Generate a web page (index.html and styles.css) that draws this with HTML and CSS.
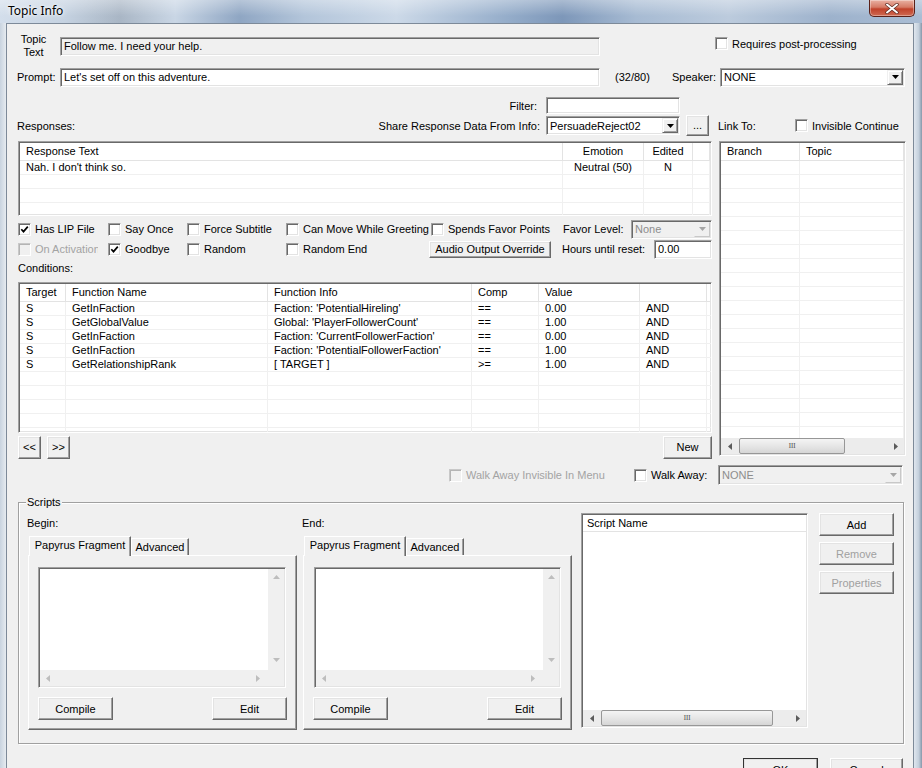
FILE: index.html
```html
<!DOCTYPE html>
<html lang="en">
<head>
  <meta charset="UTF-8">
  <meta name="viewport" content="width=device-width, initial-scale=1.0">
  <title>Topic Info</title>
  <link rel="stylesheet" href="styles.css">
</head>
<body>
<div class="window">

  <!-- title bar -->
  <div class="titlebar">
    <span class="title">Topic Info</span>
    <div class="close">
      <svg width="14" height="11" viewBox="0 0 14 11"><path d="M2 1.5l10 8M12 1.5l-10 8" stroke="#5b2a22" stroke-width="3.4" stroke-linecap="round"/><path d="M2 1.5l10 8M12 1.5l-10 8" stroke="#fff" stroke-width="2" stroke-linecap="round"/></svg>
    </div>
  </div>

  <div class="frame">
    <div class="frame-left"></div>
    <div class="client">

      <div class="row r-topic">
        <div class="lbl-topic">Topic<br>Text</div>
        <div class="field ro topic-field">Follow me. I need your help.</div>
        <label class="chk post-chk"><span class="box"></span>Requires post-processing</label>
      </div>

      <div class="row r-prompt">
        <div class="prompt-lbl">Prompt:</div>
        <div class="field prompt-field">Let's set off on this adventure.</div>
        <div class="count">(32/80)</div>
        <div class="speaker-lbl">Speaker:</div>
        <div class="combo speaker-combo">
          <span class="val">NONE</span>
          <span class="drop"><svg width="7" height="4" viewBox="0 0 7 4"><path d="M0 0h7L3.5 4z"/></svg></span>
        </div>
      </div>

      <div class="row r-filter">
        <div class="filter-lbl">Filter:</div>
        <div class="field filter-field"></div>
      </div>

      <div class="row r-resp">
        <div class="resp-lbls"><span>Responses:</span><span>Share Response Data From Info:</span></div>
        <div class="combo share-combo">
          <span class="val">PersuadeReject02</span>
          <span class="drop"><svg width="7" height="4" viewBox="0 0 7 4"><path d="M0 0h7L3.5 4z"/></svg></span>
        </div>
        <button class="btn dots-btn">...</button>
        <div class="link-lbl">Link To:</div>
        <label class="chk"><span class="box"></span>Invisible Continue</label>
      </div>

      <div class="mid">
        <div class="mid-left">

          <div class="list resp-list">
            <table class="grid">
              <thead>
                <tr><th class="rc1">Response Text</th><th class="rc2 mid-a">Emotion</th><th class="rc3 mid-a">Edited</th><th class="rc4"></th></tr>
              </thead>
              <tbody>
                <tr><td>Nah. I don't think so.</td><td class="mid-a">Neutral (50)</td><td class="mid-a">N</td><td></td></tr>
                <tr><td></td><td></td><td></td><td></td></tr>
                <tr><td></td><td></td><td></td><td></td></tr>
                <tr><td></td><td></td><td></td><td></td></tr>
              </tbody>
            </table>
          </div>

          <div class="row cb-row first">
            <label class="chk cw90"><span class="box"><svg width="9" height="9" viewBox="0 0 9 9"><path d="M1.3 4.2l2.2 2.4L7.8 1.6" fill="none" stroke="#000" stroke-width="1.7"/></svg></span>Has LIP File</label>
            <label class="chk cw79"><span class="box"></span>Say Once</label>
            <label class="chk cw99"><span class="box"></span>Force Subtitle</label>
            <label class="chk cw145"><span class="box"></span>Can Move While Greeting</label>
            <label class="chk cw132"><span class="box"></span>Spends Favor Points</label>
            <div class="favor-lbl">Favor Level:</div>
            <div class="combo dis favor-combo">
              <span class="val">None</span>
              <span class="drop"><svg width="7" height="4" viewBox="0 0 7 4"><path d="M0 0h7L3.5 4z"/></svg></span>
            </div>
          </div>

          <div class="row cb-row">
            <label class="chk cw90 dis"><span class="box"></span><span class="clip">On Activation</span></label>
            <label class="chk cw79"><span class="box"><svg width="9" height="9" viewBox="0 0 9 9"><path d="M1.3 4.2l2.2 2.4L7.8 1.6" fill="none" stroke="#000" stroke-width="1.7"/></svg></span>Goodbye</label>
            <label class="chk cw99"><span class="box"></span>Random</label>
            <label class="chk cw143"><span class="box"></span>Random End</label>
            <button class="btn audio-btn">Audio Output Override</button>
            <div class="hours-lbl">Hours until reset:</div>
            <div class="field hours-field">0.00</div>
          </div>

          <div class="row cond-lbl">Conditions:</div>

          <div class="list cond-list">
            <table class="grid">
              <thead>
                <tr><th class="k1">Target</th><th class="k2">Function Name</th><th class="k3">Function Info</th><th class="k4">Comp</th><th class="k5">Value</th><th class="k6"></th><th class="k7"></th></tr>
              </thead>
              <tbody>
                <tr><td>S</td><td>GetInFaction</td><td>Faction: 'PotentialHireling'</td><td>==</td><td>0.00</td><td>AND</td><td></td></tr>
                <tr><td>S</td><td>GetGlobalValue</td><td>Global: 'PlayerFollowerCount'</td><td>==</td><td>1.00</td><td>AND</td><td></td></tr>
                <tr><td>S</td><td>GetInFaction</td><td>Faction: 'CurrentFollowerFaction'</td><td>==</td><td>0.00</td><td>AND</td><td></td></tr>
                <tr><td>S</td><td>GetInFaction</td><td>Faction: 'PotentialFollowerFaction'</td><td>==</td><td>1.00</td><td>AND</td><td></td></tr>
                <tr><td>S</td><td>GetRelationshipRank</td><td>[ TARGET ]</td><td>&gt;=</td><td>1.00</td><td>AND</td><td></td></tr>
                <tr><td></td><td></td><td></td><td></td><td></td><td></td><td></td></tr>
                <tr><td></td><td></td><td></td><td></td><td></td><td></td><td></td></tr>
                <tr><td></td><td></td><td></td><td></td><td></td><td></td><td></td></tr>
                <tr><td></td><td></td><td></td><td></td><td></td><td></td><td></td></tr>
                <tr><td></td><td></td><td></td><td></td><td></td><td></td><td></td></tr>
              </tbody>
            </table>
          </div>

          <div class="row nav-row">
            <button class="btn nav-btn">&lt;&lt;</button>
            <button class="btn nav-btn">&gt;&gt;</button>
            <button class="btn new-btn">New</button>
          </div>
        </div>

        <div class="list link-list">
          <div class="lv-body">
            <table class="grid link-grid">
              <thead>
                <tr><th class="l1">Branch</th><th class="l2">Topic</th></tr>
              </thead>
              <tbody>
                <tr><td></td><td></td></tr><tr><td></td><td></td></tr><tr><td></td><td></td></tr><tr><td></td><td></td></tr>
                <tr><td></td><td></td></tr><tr><td></td><td></td></tr><tr><td></td><td></td></tr><tr><td></td><td></td></tr>
                <tr><td></td><td></td></tr><tr><td></td><td></td></tr><tr><td></td><td></td></tr><tr><td></td><td></td></tr>
                <tr><td></td><td></td></tr><tr><td></td><td></td></tr><tr><td></td><td></td></tr><tr><td></td><td></td></tr>
                <tr><td></td><td></td></tr><tr><td></td><td></td></tr><tr><td></td><td></td></tr><tr><td></td><td></td></tr>
              </tbody>
            </table>
          </div>
          <div class="hscroll">
            <span class="arr"><svg width="4" height="7" viewBox="0 0 4 7"><path d="M4 0v7L0 3.5z"/></svg></span>
            <span class="track"><span class="thumb link-thumb">III</span></span>
            <span class="arr"><svg width="4" height="7" viewBox="0 0 4 7"><path d="M0 0v7L4 3.5z"/></svg></span>
          </div>
        </div>
      </div>

      <div class="row r-walk">
        <label class="chk dis walk-inv"><span class="box"></span>Walk Away Invisible In Menu</label>
        <label class="chk walk-chk"><span class="box"></span>Walk Away:</label>
        <div class="combo dis walk-combo">
          <span class="val">NONE</span>
          <span class="drop"><svg width="7" height="4" viewBox="0 0 7 4"><path d="M0 0h7L3.5 4z"/></svg></span>
        </div>
      </div>

      <div class="group">
        <span class="legend">Scripts</span>
        <div class="group-body">

          <div class="scol">
            <div class="sc-lbl">Begin:</div>
            <div class="tabs">
              <span class="tab on">Papyrus Fragment</span><span class="tab">Advanced</span>
            </div>
            <div class="panel">
              <div class="editbox">
                <div class="ed-text"></div>
                <div class="vs">
                  <svg width="7" height="4" viewBox="0 0 7 4"><path d="M0 4h7L3.5 0z"/></svg>
                  <svg width="7" height="4" viewBox="0 0 7 4"><path d="M0 0h7L3.5 4z"/></svg>
                </div>
                <div class="hs">
                  <svg width="4" height="7" viewBox="0 0 4 7"><path d="M4 0v7L0 3.5z"/></svg>
                  <svg width="4" height="7" viewBox="0 0 4 7"><path d="M0 0v7L4 3.5z"/></svg>
                </div>
                <div class="corner"></div>
              </div>
              <div class="panel-btns">
                <button class="btn sbtn">Compile</button>
                <button class="btn sbtn">Edit</button>
              </div>
            </div>
          </div>

          <div class="scol end">
            <div class="sc-lbl">End:</div>
            <div class="tabs">
              <span class="tab on">Papyrus Fragment</span><span class="tab">Advanced</span>
            </div>
            <div class="panel">
              <div class="editbox">
                <div class="ed-text"></div>
                <div class="vs">
                  <svg width="7" height="4" viewBox="0 0 7 4"><path d="M0 4h7L3.5 0z"/></svg>
                  <svg width="7" height="4" viewBox="0 0 7 4"><path d="M0 0h7L3.5 4z"/></svg>
                </div>
                <div class="hs">
                  <svg width="4" height="7" viewBox="0 0 4 7"><path d="M4 0v7L0 3.5z"/></svg>
                  <svg width="4" height="7" viewBox="0 0 4 7"><path d="M0 0v7L4 3.5z"/></svg>
                </div>
                <div class="corner"></div>
              </div>
              <div class="panel-btns">
                <button class="btn sbtn">Compile</button>
                <button class="btn sbtn">Edit</button>
              </div>
            </div>
          </div>

          <div class="list script-list">
            <div class="lv-body">
              <div class="script-head">Script Name</div>
            </div>
            <div class="hscroll">
              <span class="arr"><svg width="4" height="7" viewBox="0 0 4 7"><path d="M4 0v7L0 3.5z"/></svg></span>
              <span class="track"><span class="thumb script-thumb">III</span></span>
              <span class="arr"><svg width="4" height="7" viewBox="0 0 4 7"><path d="M0 0v7L4 3.5z"/></svg></span>
            </div>
          </div>

          <div class="script-btns">
            <button class="btn side-btn">Add</button>
            <button class="btn side-btn off">Remove</button>
            <button class="btn side-btn off">Properties</button>
          </div>
        </div>
      </div>

      <div class="row r-ok">
        <button class="btn ok-btn">OK</button>
        <button class="btn cancel-btn">Cancel</button>
      </div>

    </div>
    <div class="frame-right"></div>
  </div>
</div>
</body>
</html>
```

FILE: styles.css
```css
* {
  box-sizing: border-box;
}

body {
  margin: 0;
  width: 922px;
  height: 768px;
  overflow: hidden;
  font-family: "Liberation Sans", Arial, sans-serif;
  font-size: 11px;
  color: #000;
  background: #dfe6ee;
}

.window {
  display: flex;
  flex-direction: column;
  height: 768px;
}

/* title bar */

.titlebar {
  height: 23px;
  flex: none;
  display: flex;
  align-items: flex-start;
  background:
    linear-gradient(180deg, rgba(255, 255, 255, 0.35), rgba(255, 255, 255, 0) 70%),
    linear-gradient(90deg, #d3deeb 0%, #c5d2e1 7%, #a9b6c5 13%, #c9d6e5 19%, #8fa6c3 26%, #b3c5da 33%, #ccd9e8 43%, #95adca 55%, #7d97b9 61%, #a7bbd3 69%, #bccbdd 79%, #9db2cc 90%, #aabdd4 100%);
}

.title {
  margin: 3px 0 0 8px;
  font-family: "Noto Sans", "Liberation Sans", sans-serif;
  font-size: 12px;
  line-height: 16px;
  text-shadow: 0 0 6px #fff, 0 0 3px #fff;
}

.close {
  margin: 0 7px 0 auto;
  width: 46px;
  height: 17px;
  border: 1px solid #5a2018;
  border-top: none;
  border-radius: 0 0 5px 5px;
  background: linear-gradient(#e9b1a3, #d57a65 45%, #c0412a 56%, #cf6a52);
  box-shadow: inset 0 0 0 1px rgba(255, 255, 255, 0.35);
  display: flex;
  align-items: center;
  justify-content: center;
}

/* window frame */

.frame {
  flex: 1;
  display: flex;
  min-height: 0;
}

.frame-left {
  width: 6px;
  background: linear-gradient(90deg, #c8d3df, #e6ebf0);
}

.frame-right {
  flex: 1;
  background: linear-gradient(90deg, #dfe6ee, #c3cfdc 60%, #8797a9);
}

.client {
  width: 908px;
  flex: none;
  border: 1px solid #7d8a99;
  border-bottom: none;
  background: #f0f0f0;
  overflow: hidden;
}

/* common controls */

.row {
  display: flex;
  align-items: center;
  flex: none;
}

.field {
  display: flex;
  align-items: center;
  padding-left: 3px;
  background: #fff;
  border: 1px solid;
  border-color: #a0a0a0 #fff #fff #a0a0a0;
  box-shadow: inset 1px 1px 0 #696969, inset -1px -1px 0 #e3e3e3;
  white-space: nowrap;
  overflow: hidden;
}

.field.ro {
  background: #f0f0f0;
}

.combo {
  display: flex;
  background: #fff;
  border: 1px solid;
  border-color: #a0a0a0 #fff #fff #a0a0a0;
  box-shadow: inset 1px 1px 0 #696969, inset -1px -1px 0 #e3e3e3;
  padding: 1px;
}

.combo .val {
  flex: 1;
  display: flex;
  align-items: center;
  padding-left: 2px;
  white-space: nowrap;
}

.combo .drop {
  width: 16px;
  display: flex;
  align-items: center;
  justify-content: center;
  background: #f0f0f0;
  border: 1px solid;
  border-color: #f0f0f0 #696969 #696969 #f0f0f0;
  box-shadow: inset 1px 1px 0 #fff, inset -1px -1px 0 #a0a0a0;
}

.combo.dis {
  background: #f0f0f0;
  color: #8d8d8d;
}

.combo.dis .drop {
  border-color: #f0f0f0 #c8c8c8 #c8c8c8 #f0f0f0;
  box-shadow: none;
  fill: #a6a6a6;
}

.btn {
  font: inherit;
  color: #000;
  background: #f0f0f0;
  border: 1px solid;
  border-color: #fff #696969 #696969 #fff;
  box-shadow: inset -1px -1px 0 #a0a0a0, inset 1px 1px 0 #e3e3e3;
  padding: 0;
  display: flex;
  align-items: center;
  justify-content: center;
  white-space: nowrap;
}

.btn.off {
  color: #a0a0a0;
}

.chk {
  display: flex;
  align-items: center;
  white-space: nowrap;
}

.chk .box {
  width: 13px;
  height: 13px;
  flex: none;
  margin-right: 4px;
  background: #fff;
  border: 1px solid;
  border-color: #a0a0a0 #fff #fff #a0a0a0;
  box-shadow: inset 1px 1px 0 #696969, inset -1px -1px 0 #e3e3e3;
  display: flex;
  align-items: center;
  justify-content: center;
}

.chk.dis {
  color: #a3a3a3;
}

.chk.dis .box {
  background: #f0f0f0;
  border-color: #c8c8c8 #fff #fff #c8c8c8;
  box-shadow: inset 1px 1px 0 #b4b4b4;
}

/* top rows */

.r-topic {
  margin-top: 9px;
  height: 26px;
}

.lbl-topic {
  margin-left: 10px;
  width: 33px;
  text-align: center;
  line-height: 13px;
}

.topic-field {
  margin-left: 10px;
  width: 540px;
  height: 19px;
}

.post-chk {
  align-self: flex-start;
  margin: 4px 0 0 115px;
}

.r-prompt {
  margin-top: 8px;
  height: 20px;
}

.prompt-lbl {
  margin-left: 10px;
  width: 43px;
}

.prompt-field {
  width: 540px;
  height: 19px;
}

.count {
  width: 65px;
  padding-left: 15px;
}

.speaker-lbl {
  width: 55px;
  text-align: right;
  padding-right: 4px;
}

.speaker-combo {
  width: 185px;
  height: 19px;
}

.r-filter {
  margin-top: 10px;
  height: 17px;
}

.filter-lbl {
  width: 539px;
  text-align: right;
  padding-right: 9px;
}

.filter-field {
  width: 134px;
  height: 17px;
}

.r-resp {
  margin-top: 1px;
  height: 21px;
}

.resp-lbls {
  margin-left: 10px;
  width: 529px;
  display: flex;
  justify-content: space-between;
  padding-right: 6px;
}

.share-combo {
  width: 134px;
  height: 19px;
}

.dots-btn {
  margin-left: 6px;
  width: 23px;
  height: 21px;
  align-items: flex-end;
  padding-bottom: 4px;
}

.link-lbl {
  margin-left: 9px;
  width: 77px;
}

/* middle: responses, conditions, link list */

.mid {
  display: flex;
  margin-top: 5px;
}

.mid-left {
  margin-left: 11px;
  width: 694px;
}

.list {
  background: #fff;
  border: 1px solid;
  border-color: #a0a0a0 #fff #fff #a0a0a0;
  box-shadow: inset 1px 1px 0 #696969, inset -1px -1px 0 #e3e3e3;
  padding: 1px;
  overflow: hidden;
}

.grid {
  border-collapse: separate;
  border-spacing: 0;
  table-layout: fixed;
  width: 690px;
}

.grid th {
  font-weight: normal;
  text-align: left;
  height: 18px;
  line-height: 17px;
  padding: 0 0 0 6px;
  border-right: 1px solid #e3e3e3;
  border-bottom: 1px solid #e3e3e3;
  white-space: nowrap;
  overflow: hidden;
}

.grid td {
  height: 14px;
  line-height: 13px;
  padding: 0 0 0 6px;
  border-right: 1px solid #f0f0f0;
  border-bottom: 1px solid #f0f0f0;
  white-space: nowrap;
  overflow: hidden;
}

.grid .mid-a {
  text-align: center;
  padding: 0;
}

.resp-list {
  height: 75px;
}

.rc1 { width: 543px; }
.rc2 { width: 81px; }
.rc3 { width: 49px; }
.rc4 { width: 17px; }

.cb-row {
  height: 20px;
}

.cb-row.first {
  margin-top: 3px;
}

.cw90 { width: 90px; }
.cw79 { width: 79px; }
.cw99 { width: 99px; }
.cw145 { width: 145px; }
.cw143 { width: 143px; }
.cw132 { width: 132px; }

.clip {
  width: 63px;
  overflow: hidden;
}

.favor-lbl {
  width: 68px;
}

.favor-combo {
  width: 81px;
  height: 19px;
}

.audio-btn {
  width: 122px;
  height: 17px;
}

.hours-lbl {
  margin-left: 11px;
  width: 92px;
}

.hours-field {
  width: 58px;
  height: 19px;
}

.cond-lbl {
  height: 18px;
}

.cond-list {
  margin-top: 5px;
  height: 151px;
}

.k1 { width: 46px; }
.k2 { width: 202px; }
.k3 { width: 204px; }
.k4 { width: 67px; }
.k5 { width: 101px; }
.k6 { width: 67px; }
.k7 { width: 3px; }

.nav-row {
  margin-top: 2px;
  height: 24px;
}

.nav-btn {
  width: 23px;
  height: 23px;
  margin-right: 6px;
}

.new-btn {
  margin-left: auto;
  width: 49px;
  height: 23px;
}

.link-list {
  margin-left: 7px;
  width: 187px;
  height: 315px;
  display: flex;
  flex-direction: column;
}

.lv-body {
  flex: 1;
  overflow: hidden;
}

.link-grid {
  width: 183px;
}

.l1 { width: 79px; }
.l2 { width: 104px; }

.hscroll {
  height: 16px;
  flex: none;
  display: flex;
  background: #ececec;
}

.hscroll .arr {
  width: 17px;
  display: flex;
  align-items: center;
  justify-content: center;
  fill: #5b5b5b;
}

.hscroll .track {
  flex: 1;
  display: flex;
}

.thumb {
  margin-left: 1px;
  border: 1px solid #979797;
  border-radius: 2px;
  background: linear-gradient(#f4f4f4, #e6e6e6 50%, #d6d6d6);
  display: flex;
  align-items: center;
  justify-content: center;
  font-family: "DejaVu Serif", serif;
  font-size: 7px;
  color: #555;
  letter-spacing: -0.5px;
}

.link-thumb {
  width: 106px;
}

.script-thumb {
  width: 172px;
}

/* walk away */

.r-walk {
  margin-top: 6px;
  height: 20px;
}

.walk-inv {
  margin-left: 442px;
  width: 185px;
}

.walk-chk {
  width: 84px;
}

.walk-combo {
  width: 185px;
  height: 20px;
}

/* scripts group */

.group {
  margin: 17px 0 0 11px;
  width: 886px;
  height: 242px;
  border: 1px solid #a0a0a0;
  box-shadow: inset 1px 1px 0 #fff, 1px 1px 0 #fff;
}

.legend {
  display: block;
  width: max-content;
  margin: -8px 0 0 7px;
  padding: 0 1px;
  height: 14px;
  line-height: 14px;
  background: #f0f0f0;
}

.group-body {
  display: flex;
  align-items: flex-start;
}

.scol {
  margin-left: 9px;
  width: 269px;
}

.scol.end {
  margin-left: 6px;
}

.sc-lbl {
  margin-top: 7px;
  margin-left: -1px;
  height: 14px;
  line-height: 14px;
}

.tabs {
  margin-top: 5px;
  margin-left: 1px;
  height: 20px;
  display: flex;
  align-items: flex-end;
}

.tab {
  height: 17px;
  width: 58px;
  display: flex;
  align-items: center;
  justify-content: center;
  border: 1px solid;
  border-color: #fff #696969 transparent #fff;
  border-bottom: none;
  box-shadow: inset -1px 0 0 #a0a0a0;
}

.tab.on {
  position: relative;
  z-index: 1;
  width: 102px;
  height: 20px;
  margin-bottom: -1px;
  padding-bottom: 3px;
  background: #f0f0f0;
}

.panel {
  height: 175px;
  border: 1px solid;
  border-color: #fff #696969 #696969 #fff;
  box-shadow: inset -1px -1px 0 #a0a0a0;
}

.editbox {
  margin: 11px 0 0 9px;
  width: 248px;
  height: 121px;
  display: grid;
  grid-template-columns: 1fr 16px;
  grid-template-rows: 1fr 16px;
  padding: 1px;
  background: #fff;
  border: 1px solid;
  border-color: #a0a0a0 #fff #fff #a0a0a0;
  box-shadow: inset 1px 1px 0 #696969, inset -1px -1px 0 #e3e3e3;
}

.scol.end .editbox {
  margin-left: 10px;
  width: 247px;
}

.vs {
  background: #f0f0f0;
  display: flex;
  flex-direction: column;
  align-items: center;
  justify-content: space-between;
  padding: 6px 0 8px;
  fill: #bdbdbd;
}

.hs {
  background: #f0f0f0;
  display: flex;
  align-items: center;
  justify-content: space-between;
  padding: 0 8px 0 6px;
  fill: #bdbdbd;
}

.corner {
  background: #f0f0f0;
}

.panel-btns {
  margin: 9px 0 0 9px;
  width: 249px;
  display: flex;
  justify-content: space-between;
}

.sbtn {
  width: 75px;
  height: 23px;
}

.script-list {
  margin: 4px 0 0 9px;
  width: 227px;
  height: 215px;
  display: flex;
  flex-direction: column;
}

.script-head {
  height: 17px;
  line-height: 16px;
  padding-left: 4px;
  border-bottom: 1px solid #e3e3e3;
}

.script-btns {
  margin: 4px 0 0 11px;
  display: flex;
  flex-direction: column;
  gap: 6px;
}

.side-btn {
  width: 75px;
  height: 23px;
}

/* bottom buttons */

.r-ok {
  margin-top: 14px;
}

.ok-btn {
  margin-left: 736px;
  width: 75px;
  height: 23px;
  outline: 1px solid #333;
  outline-offset: -1px;
}

.cancel-btn {
  margin-left: 12px;
  width: 73px;
  height: 23px;
}
```
